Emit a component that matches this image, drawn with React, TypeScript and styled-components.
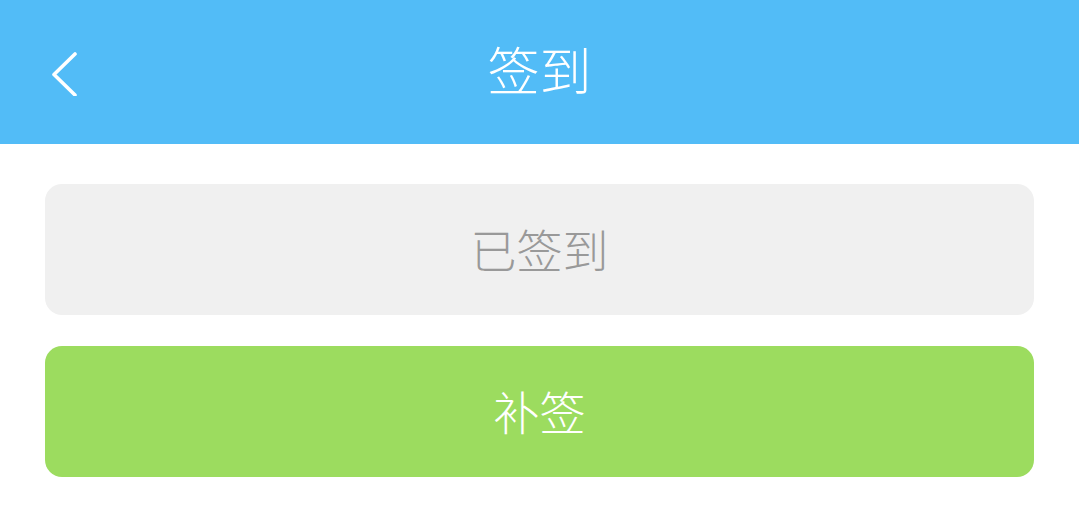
import React from "react";
import styled, { createGlobalStyle } from "styled-components";

const Global = createGlobalStyle`
  html, body { margin: 0; padding: 0; background: #ffffff; }
  body { font-family: "Noto Sans CJK SC", "Noto Sans", sans-serif; }
`;

const Page = styled.div`
  width: 1079px;
  min-height: 519px;
  background: #ffffff;
`;

const Header = styled.header`
  height: 144px;
  background: #52bcf7;
  display: grid;
  grid-template-columns: 144px 1fr 144px;
  align-items: center;
`;

const BackButton = styled.button`
  border: none;
  background: transparent;
  padding: 0 0 0 48px;
  height: 100%;
  display: flex;
  align-items: center;
  cursor: pointer;
`;

const Title = styled.h1`
  margin: 0;
  text-align: center;
  color: #ffffff;
  font-size: 52px;
  font-weight: 300;
  line-height: 1;
  padding-bottom: 6px;
`;

const Body = styled.main`
  padding: 40px 45px 0;
  display: flex;
  flex-direction: column;
  gap: 31px;
`;

const ActionButton = styled.button<{ $variant: "done" | "primary" }>`
  height: 131px;
  border: none;
  border-radius: 17px;
  font-family: "Noto Sans CJK SC", "Noto Sans", sans-serif;
  font-size: 46px;
  font-weight: 300;
  display: flex;
  align-items: center;
  justify-content: center;
  background: ${(p) => (p.$variant === "done" ? "#f0f0f0" : "#9cdc5f")};
  color: ${(p) => (p.$variant === "done" ? "#999999" : "#ffffff")};
  padding: 0 0 4px;
`;

export default function App() {
  return (
    <>
      <Global />
      <Page>
        <Header>
          <BackButton aria-label="返回">
            <svg width="32" height="48" viewBox="0 0 32 48">
              <path
                d="M27 6 L6 26.5 L27 47"
                fill="none"
                stroke="#ffffff"
                strokeWidth="3.6"
                strokeLinecap="round"
                strokeLinejoin="round"
              />
            </svg>
          </BackButton>
          <Title>签到</Title>
          <div />
        </Header>
        <Body>
          <ActionButton $variant="done">已签到</ActionButton>
          <ActionButton $variant="primary">补签</ActionButton>
        </Body>
      </Page>
    </>
  );
}
